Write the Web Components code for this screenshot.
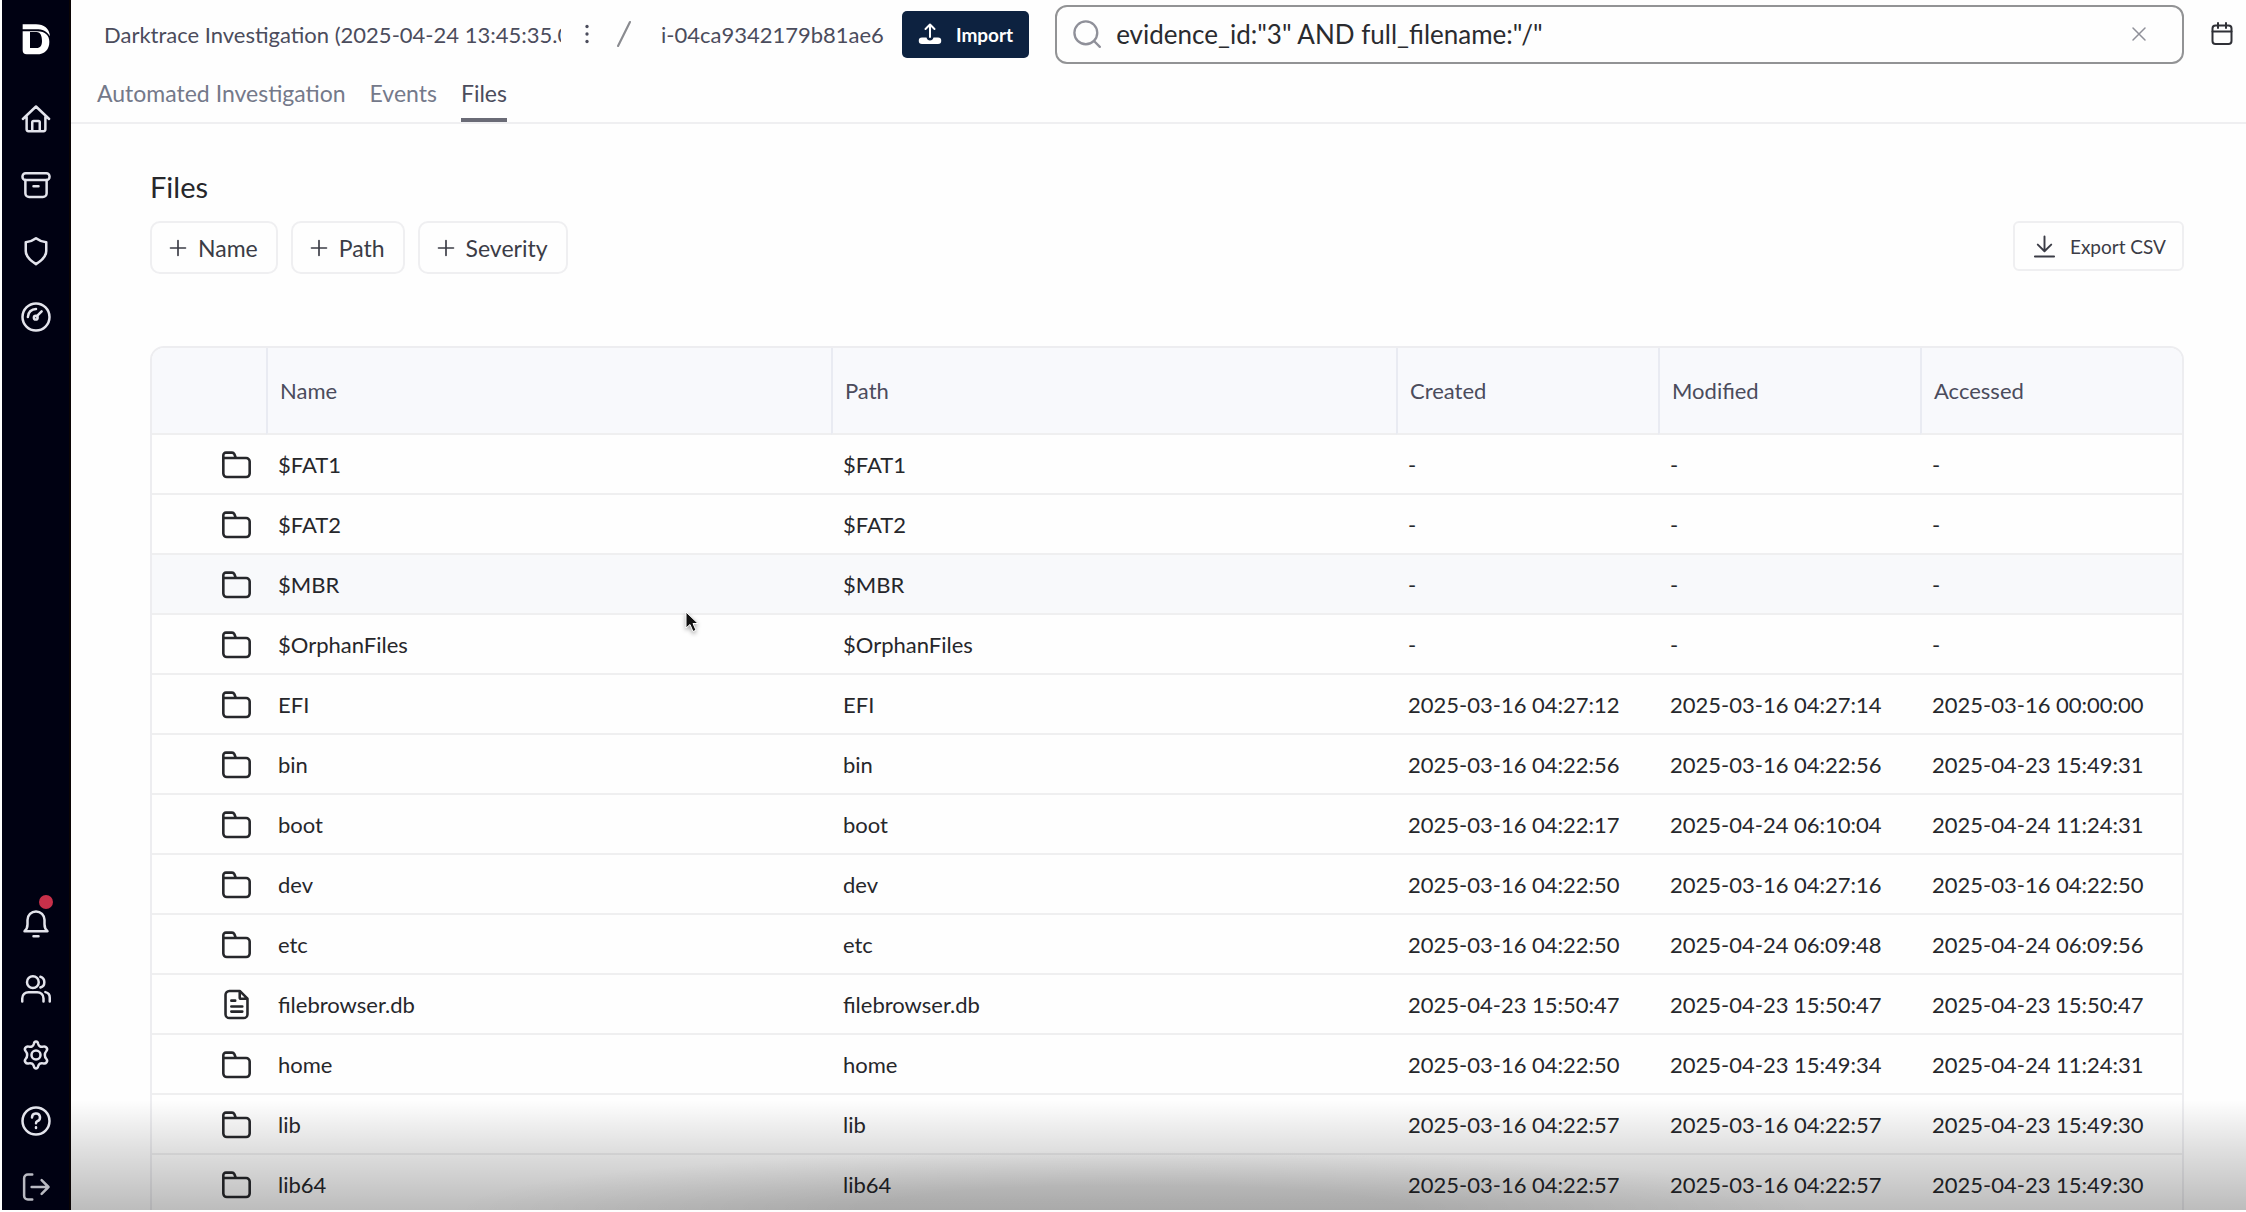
<!DOCTYPE html>
<html lang="en">
<head>
  <meta charset="utf-8">
  <title>Files</title>
  <style>
    html, body {
      margin: 0;
      height: 100%;
    }
    body {
      font-family: Lato, "Liberation Sans", sans-serif;
      font-size: 22px;
      color: #26272b;
      background: #fefefe;
    }
  </style>
</head>
<body>
  <files-app></files-app>

  <script>
    const ICONS = {
      home: '<path d="M1.500 12 12 2 22.500 12M4.500 10v10.200a1.500 1.500 0 0 0 1.500 1.500h12a1.500 1.500 0 0 0 1.500-1.500V10M9 21.500v-7a1 1 0 0 1 1-1h4a1 1 0 0 1 1 1v7"/>',
      archive: '<rect x="1.200" y="2.500" width="21.600" height="5.500" rx="2.500"/><path d="M3.500 8v10.500a3 3 0 0 0 3 3h11a3 3 0 0 0 3-3V8M10 13h4"/>',
      shield: '<path d="M12 1.800c2.600 2 5.200 2.900 8.200 3.200v7c0 5-4.200 8-8.200 10.500C8 20 3.800 17 3.800 12V5c3-.3 5.600-1.200 8.200-3.200z"/>',
      gauge: '<circle cx="12" cy="12" r="10.800"/><path d="M5.500 12A6.500 6.500 0 0 1 12 5.500M12.500 11.500l4-4"/><circle cx="11.800" cy="12.500" r="1.500"/>',
      bell: '<path d="M2.800 18.500c1.700-1.300 2.400-3 2.400-5.500V9.500a6.800 6.800 0 0 1 13.600 0V13c0 2.500.7 4.200 2.400 5.500zM10 22.500h4"/>',
      users: '<circle cx="9.500" cy="6.500" r="4.700"/><path d="M1 22v-2.500a5 5 0 0 1 5-5h7a5 5 0 0 1 5 5V22M15.500 2.200a4.500 4.500 0 0 1 0 8.600M19.500 14.500a4.500 4.500 0 0 1 3.500 4.500v3"/>',
      cog: '<circle cx="12" cy="12" r="3.600"/><path d="M10.300 3c.5-2.300 2.900-2.300 3.400 0 .5 2 2 2.900 4 2.300 2.400-.7 4.200 1.900 2.500 3.700-1.500 1.600-1.500 4.400 0 6 1.700 1.800-.1 4.400-2.500 3.700-2-.6-3.500.3-4 2.300-.5 2.300-2.900 2.300-3.400 0-.5-2-2-2.900-4-2.300-2.400.7-4.200-1.900-2.500-3.700 1.500-1.600 1.500-4.400 0-6C2.100 7.200 3.900 4.600 6.300 5.300c2 .6 3.500-.3 4-2.300z"/>',
      help: '<circle cx="12" cy="12" r="10.800"/><path d="M8.800 9.200A3.200 3.200 0 1 1 13 12.200c-.8.300-1 .8-1 1.600M12 17v.6"/>',
      logout: '<path d="M9 2H5.500a3 3 0 0 0-3 3v14a3 3 0 0 0 3 3H9M8.500 12H22M16.500 6.500 22 12l-5.500 5.500"/>',
      folder: '<path d="M1.800 19V4.800a2 2 0 0 1 2-2h4.700a2 2 0 0 1 1.800 1.100L11.500 7H19.500a2.700 2.700 0 0 1 2.700 2.700V19a2.700 2.700 0 0 1-2.700 2.700h-15A2.700 2.700 0 0 1 1.800 19zM1.800 7H12"/>',
      file: '<path d="M14.500 1.500H6.500a3 3 0 0 0-3 3v15a3 3 0 0 0 3 3h11a3 3 0 0 0 3-3v-12zM14.500 1.500v5a1 1 0 0 0 1 1h5M8 9h3M8 13.500h8.500M8 17.500h8.500"/>',
      search: '<circle cx="11" cy="11" r="9.800"/><path d="m18 18 5 5"/>',
      close: '<path d="m4 4 16 16M20 4 4 20"/>',
      calendar: '<rect x="2.500" y="3.500" width="19" height="18.500" rx="3"/><path d="M2.500 9.500h19M8 1v5M16 1v5"/>',
      plus: '<path d="M12 3v18M3 12h18"/>',
      download: '<path d="M12 1.500v15M5 10l7 7 7-7M2 22.500h20"/>',
      dots: '<g fill="currentColor" stroke="none"><circle cx="12" cy="3" r="2"/><circle cx="12" cy="12" r="2"/><circle cx="12" cy="21" r="2"/></g>',
      slash: '<path d="M17.500 1 6.500 23"/>',
      upload: '<path d="M12 15V3M7.500 7 12 2.500 16.500 7"/><path d="M4 15.500h4.500c.5 2 1.700 3 3.500 3s3-1 3.500-3H20a3 3 0 0 1 0 6.500H4a3 3 0 0 1 0-6.500z" fill="currentColor" stroke="none"/>',
      logo: '<g fill="currentColor" stroke="none"><path d="M2 1h10c6 0 10 3 10.500 9C20 6 17 4.700 12 4.700H2z"/><path fill-rule="evenodd" d="M2 6.200h11c6 0 9 3.300 9 8 0 5.500-3.500 9.300-9.500 9.300H5a3 3 0 0 1-3-3zM7.500 6.800v12h5c2.700 0 4-2 4-5.300 0-3.700-1.200-6.700-4-6.700z"/></g>'
    };

    class UiIcon extends HTMLElement {
      constructor() {
        super();
        this.attachShadow({ mode: 'open' });
      }

      connectedCallback() {
        this.shadowRoot.innerHTML = `
          <style>
            :host {
              display: inline-block;
              flex: none;
              width: var(--icon-size, 24px);
              height: var(--icon-size, 24px);
            }
            svg {
              display: block;
              width: 100%;
              height: 100%;
              overflow: visible;
            }
          </style>
          <svg viewBox="0 0 24 24" fill="none" stroke="currentColor" stroke-width="${this.getAttribute('weight') || 2}"
            stroke-linecap="round" stroke-linejoin="round" aria-hidden="true">${ICONS[this.getAttribute('name')]}</svg>
        `;
      }
    }

    class SideNav extends HTMLElement {
      constructor() {
        super();
        this.attachShadow({ mode: 'open' });
      }

      link(icon, label) {
        return `<a href="#${icon}" aria-label="${label}"><ui-icon name="${icon}"></ui-icon></a>`;
      }

      connectedCallback() {
        this.shadowRoot.innerHTML = `
          <style>
            :host {
              display: block;
              box-sizing: border-box;
              background: #000112;
              border-left: 2px solid #fefefe;
              border-right: 2px solid #0b0505;
            }
            nav {
              display: flex;
              flex-direction: column;
              justify-content: space-between;
              align-items: center;
              box-sizing: border-box;
              height: 100%;
              padding: 6px 0 0;
            }
            div {
              display: flex;
              flex-direction: column;
            }
            a {
              position: relative;
              display: grid;
              place-items: center;
              box-sizing: border-box;
              width: 66px;
              height: 66px;
              color: #e3e4ec;
              --icon-size: 30px;
            }
            .logo {
              height: 80px;
              padding-top: 17px;
              align-content: start;
              color: #fff;
              --icon-size: 32px;
            }
            .alert::after {
              content: "";
              position: absolute;
              top: 5px;
              right: 16px;
              width: 14px;
              height: 14px;
              border-radius: 50%;
              background: #c8304a;
            }
            .exit {
              height: 56px;
              padding-top: 10px;
              color: #b9bac2;
            }
          </style>
          <nav aria-label="Main">
            <div>
              <a class="logo" href="#top" aria-label="Start"><ui-icon name="logo"></ui-icon></a>
              ${this.link('home', 'Home')}
              ${this.link('archive', 'Archive')}
              ${this.link('shield', 'Protection')}
              ${this.link('gauge', 'Dashboard')}
            </div>
            <div>
              <a class="alert" href="#bell" aria-label="Notifications"><ui-icon name="bell"></ui-icon></a>
              ${this.link('users', 'Users')}
              ${this.link('cog', 'Settings')}
              ${this.link('help', 'Help')}
              <a class="exit" href="#logout" aria-label="Log out"><ui-icon name="logout"></ui-icon></a>
            </div>
          </nav>
        `;
      }
    }

    class TopBar extends HTMLElement {
      constructor() {
        super();
        this.attachShadow({ mode: 'open' });
      }

      connectedCallback() {
        this.shadowRoot.innerHTML = `
          <style>
            :host {
              display: flex;
              align-items: center;
              box-sizing: border-box;
              height: 68px;
              padding: 0 12px 0 33px;
              color: #4b4c5c;
            }
            button {
              display: flex;
              align-items: center;
              padding: 0;
              border: 0;
              background: none;
              color: inherit;
              font: inherit;
            }
            .case {
              width: 457px;
              overflow: hidden;
              white-space: nowrap;
            }
            .more {
              margin-left: 16px;
              --icon-size: 20px;
            }
            .slash {
              margin: 0 24px 0 14px;
              color: #8a8b90;
              --icon-size: 26px;
            }
            .import {
              gap: 14px;
              height: 47px;
              margin: 0 26px 0 18px;
              padding: 0 16px;
              border-radius: 5px;
              background: #0d2240;
              color: #fff;
              font-size: 19px;
              font-weight: bold;
              --icon-size: 24px;
            }
            form {
              flex: 1;
              display: flex;
              align-items: center;
              box-sizing: border-box;
              height: 59px;
              margin: 0;
              padding: 0 34px 0 16px;
              border: 2px solid #929395;
              border-radius: 12px;
              color: #8f9099;
            }
            .search-icon {
              --icon-size: 28px;
            }
            .clear {
              --icon-size: 18px;
            }
            input {
              flex: 1;
              min-width: 0;
              padding: 0 0 0 15px;
              border: 0;
              outline: 0;
              background: none;
              color: #2a2b2f;
              font: inherit;
              font-size: 26px;
            }
            .calendar {
              margin-left: 26px;
              color: #2f3036;
              --icon-size: 24px;
            }
          </style>
          <span class="case">Darktrace Investigation (2025-04-24 13:45:35.000)</span>
          <button class="more" aria-label="More"><ui-icon name="dots"></ui-icon></button>
          <ui-icon class="slash" name="slash"></ui-icon>
          <span>i-04ca9342179b81ae6</span>
          <button class="import"><ui-icon name="upload"></ui-icon>Import</button>
          <form role="search">
            <ui-icon class="search-icon" name="search"></ui-icon>
            <input type="text" aria-label="Search files" value='evidence_id:"3" AND full_filename:"/"'>
            <button class="clear" type="button" aria-label="Clear"><ui-icon name="close"></ui-icon></button>
          </form>
          <button class="calendar" aria-label="Date range"><ui-icon name="calendar"></ui-icon></button>
        `;
      }
    }

    class TabBar extends HTMLElement {
      constructor() {
        super();
        this.attachShadow({ mode: 'open' });
      }

      connectedCallback() {
        this.shadowRoot.innerHTML = `
          <style>
            :host {
              display: block;
              border-bottom: 2px solid #efeff1;
            }
            nav {
              display: flex;
              gap: 24px;
              padding: 0 26px;
            }
            ::slotted(a) {
              box-sizing: border-box;
              height: 54px;
              padding-top: 10px;
              border-bottom: 4px solid transparent;
              color: #74798a;
              font-size: 23px;
              line-height: 30px;
              text-decoration: none;
            }
            ::slotted(a[aria-current]) {
              border-color: #6a6b76;
              color: #4b4c5c;
            }
          </style>
          <nav aria-label="Views"><slot></slot></nav>
        `;
      }
    }

    class ToolButton extends HTMLElement {
      constructor() {
        super();
        this.attachShadow({ mode: 'open' });
      }

      connectedCallback() {
        this.shadowRoot.innerHTML = `
          <style>
            :host {
              display: block;
            }
            button {
              display: flex;
              align-items: center;
              gap: 10px;
              box-sizing: border-box;
              height: 53px;
              padding: 0 18px 0 16px;
              border: 2px solid #efeff1;
              border-radius: 10px;
              background: #fefefe;
              color: #3b3c46;
              font: inherit;
              font-size: 23px;
              --icon-size: 20px;
            }
            :host([compact]) button {
              gap: 14px;
              height: 50px;
              padding: 0 16px 0 18px;
              border-radius: 6px;
              font-size: 19px;
              --icon-size: 23px;
            }
          </style>
          <button><ui-icon name="${this.getAttribute('icon')}"></ui-icon><slot></slot></button>
        `;
      }
    }

    class FileTable extends HTMLElement {
      constructor() {
        super();
        this.attachShadow({ mode: 'open' });
      }

      // each entry: name, created, modified, accessed
      set files(files) {
        this.shadowRoot.innerHTML = `
          <style>
            :host {
              display: block;
              overflow: hidden;
              border: 2px solid #ededf0;
              border-radius: 14px 14px 0 0;
            }
            table {
              width: 100%;
              table-layout: fixed;
              border-collapse: separate;
              border-spacing: 0;
            }
            .icon-col {
              width: 114px;
            }
            .date-col {
              width: 262px;
            }
            th, td {
              box-sizing: border-box;
              padding: 0 0 0 12px;
              border-bottom: 2px solid #efeff0;
              text-align: left;
              white-space: nowrap;
            }
            th {
              height: 87px;
              background: #f8f9fc;
              color: #4b4c5c;
              font-weight: normal;
            }
            th + th {
              border-left: 2px solid #e9ebf2;
            }
            td {
              height: 60px;
            }
            td:first-child {
              padding: 0 14px 0 0;
              text-align: right;
              --icon-size: 31px;
            }
            td ui-icon {
              vertical-align: middle;
            }
            .current td {
              background: #f8f9fb;
            }
          </style>
          <table>
            <colgroup>
              <col class="icon-col"><col><col><col class="date-col"><col class="date-col"><col class="date-col">
            </colgroup>
            <thead>
              <tr><th aria-label="Type"></th><th>Name</th><th>Path</th><th>Created</th><th>Modified</th><th>Accessed</th></tr>
            </thead>
            <tbody>
              ${files.map(file => this.getRow(file)).join('')}
            </tbody>
          </table>
        `;
      }

      getRow([name, created = '-', modified = '-', accessed = '-']) {
        const icon = name.includes('.') ? 'file' : 'folder';
        return `
          <tr class="${name === '$MBR' ? 'current' : ''}">
            <td><ui-icon name="${icon}"></ui-icon></td>
            <td>${name}</td>
            <td>${name}</td>
            <td>${created}</td>
            <td>${modified}</td>
            <td>${accessed}</td>
          </tr>
        `;
      }
    }

    const FILES = [
      ['$FAT1'],
      ['$FAT2'],
      ['$MBR'],
      ['$OrphanFiles'],
      ['EFI', '2025-03-16 04:27:12', '2025-03-16 04:27:14', '2025-03-16 00:00:00'],
      ['bin', '2025-03-16 04:22:56', '2025-03-16 04:22:56', '2025-04-23 15:49:31'],
      ['boot', '2025-03-16 04:22:17', '2025-04-24 06:10:04', '2025-04-24 11:24:31'],
      ['dev', '2025-03-16 04:22:50', '2025-03-16 04:27:16', '2025-03-16 04:22:50'],
      ['etc', '2025-03-16 04:22:50', '2025-04-24 06:09:48', '2025-04-24 06:09:56'],
      ['filebrowser.db', '2025-04-23 15:50:47', '2025-04-23 15:50:47', '2025-04-23 15:50:47'],
      ['home', '2025-03-16 04:22:50', '2025-04-23 15:49:34', '2025-04-24 11:24:31'],
      ['lib', '2025-03-16 04:22:57', '2025-03-16 04:22:57', '2025-04-23 15:49:30'],
      ['lib64', '2025-03-16 04:22:57', '2025-03-16 04:22:57', '2025-04-23 15:49:30']
    ];

    class FilesApp extends HTMLElement {
      constructor() {
        super();
        this.attachShadow({ mode: 'open' });
      }

      connectedCallback() {
        this.shadowRoot.innerHTML = `
          <style>
            :host {
              position: relative;
              display: grid;
              grid-template-columns: 71px minmax(0, 1fr);
              box-sizing: border-box;
              height: 100vh;
              overflow: hidden;
              border-bottom: 2px solid #fefefe;
            }
            .page {
              min-height: 0;
              overflow: hidden;
            }
            main {
              padding: 46px 62px 0 79px;
            }
            h1 {
              margin: 0;
              font-size: 29px;
              line-height: 34px;
              font-weight: normal;
            }
            .tools {
              display: flex;
              gap: 13px;
              margin: 17px 0 72px;
            }
            .export {
              margin-left: auto;
            }
            .shade {
              position: absolute;
              left: 71px;
              right: 0;
              bottom: 0;
              height: 110px;
              background:
                radial-gradient(ellipse 680px 60px at 49% 100%, rgba(0, 0, 0, 0.1) 40%, transparent),
                linear-gradient(transparent, rgba(0, 0, 0, 0.12) 45%, rgba(0, 0, 0, 0.26));
              pointer-events: none;
            }
            .pointer {
              position: absolute;
              left: 685px;
              top: 611px;
              width: 14px;
              height: 22px;
              filter: drop-shadow(0 2px 2px rgba(0, 0, 0, 0.35));
            }
          </style>
          <side-nav></side-nav>
          <div class="page">
            <top-bar></top-bar>
            <tab-bar>
              <a href="#investigation">Automated Investigation</a>
              <a href="#events">Events</a>
              <a href="#files" aria-current="page">Files</a>
            </tab-bar>
            <main>
              <h1>Files</h1>
              <div class="tools">
                <tool-button icon="plus">Name</tool-button>
                <tool-button icon="plus">Path</tool-button>
                <tool-button icon="plus">Severity</tool-button>
                <tool-button class="export" icon="download" compact>Export CSV</tool-button>
              </div>
              <file-table></file-table>
            </main>
          </div>
          <div class="shade"></div>
          <svg class="pointer" viewBox="0 0 14 22" aria-hidden="true">
            <path d="M1 1v16l4-3.500 3 7 3-1.300-3-6.700h5z" fill="#111" stroke="#fff"/>
          </svg>
        `;
        this.shadowRoot.querySelector('file-table').files = FILES;
      }
    }

    customElements.define('ui-icon', UiIcon);
    customElements.define('side-nav', SideNav);
    customElements.define('top-bar', TopBar);
    customElements.define('tab-bar', TabBar);
    customElements.define('tool-button', ToolButton);
    customElements.define('file-table', FileTable);
    customElements.define('files-app', FilesApp);
  </script>
</body>
</html>
